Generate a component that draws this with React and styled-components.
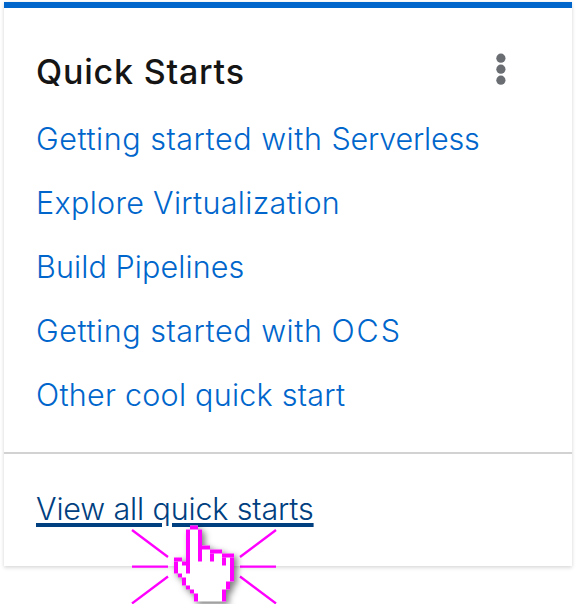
import React from "react";
import styled, { createGlobalStyle } from "styled-components";

const GlobalStyle = createGlobalStyle`
  * { box-sizing: border-box; }
  body { margin: 0; background: #fff; font-family: Inter, "Liberation Sans", sans-serif; }
`;

const Page = styled.div`
  position: relative;
  height: 604px;
  overflow: hidden;
  padding: 2px 4px;
`;

const Card = styled.section`
  height: 564px;
  background: #fff;
  border-top: 6px solid #06c;
  box-shadow: 0 2px 4px rgba(3, 3, 3, 0.12), 0 0 4px rgba(3, 3, 3, 0.06);
`;

const Header = styled.header`
  display: flex;
  align-items: flex-start;
  justify-content: space-between;
  height: 99px;
  padding: 44px 66px 0 32px;
`;

const Title = styled.h2`
  margin: 0;
  font-size: 34px;
  font-weight: 540;
  line-height: 40px;
  letter-spacing: 0.8px;
  color: #151515;
  white-space: nowrap;
`;

const MenuButton = styled.button`
  display: flex;
  margin-top: 1px;
  padding: 0;
  border: 0;
  background: none;
  color: #6a6e73;
`;

const List = styled.ul`
  margin: 0;
  padding: 0 32px 25px;
  list-style: none;
`;

const Item = styled.li`
  display: flex;
  align-items: center;
  height: 64px;
`;

const Link = styled.a`
  font-size: 30.5px;
  font-weight: 300;
  line-height: 40px;
  letter-spacing: ${(p) => p.$tracking}px;
  color: #06c;
  white-space: nowrap;
`;

const Tail = styled.span`
  letter-spacing: ${(p) => p.$tracking}px;
`;

const FooterLink = styled(Link)`
  color: #004080;
  text-decoration: underline;
  text-decoration-thickness: 4px;
  text-underline-offset: 3px;
`;

const Footer = styled.footer`
  display: flex;
  align-items: center;
  height: 114px;
  padding: 0 32px 2px;
  border-top: 2px solid #d2d2d2;
`;

const Pointer = styled.svg`
  position: absolute;
  left: 124px;
  top: 516px;
  pointer-events: none;
`;

const Hand = styled.g`
  filter: drop-shadow(3px 3px 3px rgba(0, 0, 0, 0.5));
`;

const LINKS = [
  { label: "Getting started with ", tracking: 0.54, tail: "Serverless", tailTracking: -0.2 },
  { label: "Explore Virtualization", tracking: 0.31 },
  { label: "Build Pipelines", tracking: 0.1 },
  { label: "Getting started with ", tracking: 0.54, tail: "OCS", tailTracking: 1.9 },
  { label: "Other cool quick start", tracking: 0.25 },
];

// Hand outline as [column, row, width, height] blocks of 4px.
const OUTLINE = [
  [4, 0, 2, 1],
  [3, 1, 1, 11],
  [6, 1, 1, 8],
  [7, 5, 2, 1],
  [9, 6, 3, 1],
  [9, 7, 1, 2],
  [12, 7, 3, 1],
  [12, 8, 1, 2],
  [14, 8, 1, 6],
  [13, 14, 1, 2],
  [12, 16, 1, 3],
  [0, 8, 2, 1],
  [0, 9, 1, 3],
  [2, 9, 1, 1],
  [1, 12, 1, 1],
  [2, 13, 1, 2],
  [3, 15, 1, 1],
  [4, 16, 1, 1],
  [5, 17, 1, 2],
];

function ClickPointer() {
  return (
    <Pointer width="160" height="88" viewBox="124 516 160 88" aria-hidden="true">
      <g stroke="#f0f" strokeWidth="2.3">
        <path d="M132 530L168 557M132 566.6H168M132 603.5L168 576.5" />
        <path d="M276 530L240 557M276 566.6H240M276 603.5L240 576.5" />
      </g>
      <Hand>
        <g transform="translate(174 525.5) scale(4)">
          <path
            fill="#fff"
            d="M4 0H6V1H7V5H9V6H12V7H15V14H14V16H13V19H5V17H4V16H3V15H2V13H1V12H0V8H2V9H3V1H4Z"
          />
          {OUTLINE.map(([x, y, w, h]) => (
            <rect key={`${x}-${y}`} x={x} y={y} width={w} height={h} fill="#f0f" />
          ))}
        </g>
      </Hand>
    </Pointer>
  );
}

export default function App() {
  return (
    <Page>
      <GlobalStyle />
      <Card>
        <Header>
          <Title>Quick Starts</Title>
          <MenuButton aria-label="Actions">
            <svg width="10" height="32" viewBox="0 0 10 32" fill="currentColor">
              <circle cx="4.9" cy="5.2" r="4.6" />
              <circle cx="4.9" cy="16.2" r="4.6" />
              <circle cx="4.9" cy="27.2" r="4.6" />
            </svg>
          </MenuButton>
        </Header>
        <List>
          {LINKS.map((l) => (
            <Item key={l.label + (l.tail || "")}>
              <Link $tracking={l.tracking}>
                {l.label}
                {l.tail && <Tail $tracking={l.tailTracking}>{l.tail}</Tail>}
              </Link>
            </Item>
          ))}
        </List>
        <Footer>
          <FooterLink $tracking={-0.15}>View all quick starts</FooterLink>
        </Footer>
      </Card>
      <ClickPointer />
    </Page>
  );
}
